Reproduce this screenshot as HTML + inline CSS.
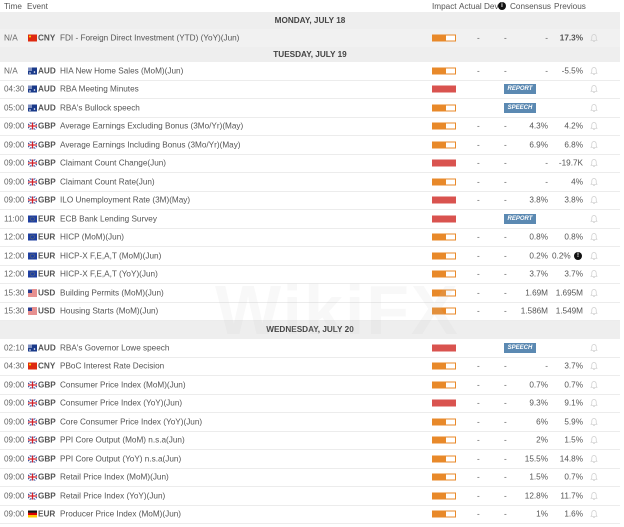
<!DOCTYPE html>
<html><head><meta charset="utf-8"><style>
*{margin:0;padding:0;box-sizing:border-box}
body{width:624px;height:527px;background:#fff;font-family:"Liberation Sans",sans-serif;font-size:8.2px;color:#555;position:relative;overflow:hidden}
.r{position:absolute;left:0;width:620px;height:18.5px;border-bottom:1px solid #ececec}
.r>*{position:absolute;top:50%;transform:translateY(-50%);white-space:nowrap}
.t{left:4px;color:#666}
.f{left:28px;width:9px;height:7px}
.c{left:38px;font-weight:bold;color:#555}
.e{left:60px;color:#555}
.im{left:432px;width:24px;height:7px;border:1px solid #e8892a;background:linear-gradient(90deg,#e8892a 58%,#fff 58%)}
.hi{left:432px;width:24px;height:7px;background:#d9534f}
.a{left:477px}.d{left:504px}
.cs{right:72px;color:#555}
.p{right:37px;color:#555}
.b{left:590px;width:8px;height:9px}
.bd{left:504px;width:32px;height:10px;background:#5b89b2;color:#fff;font-size:6px;font-weight:bold;font-style:italic;text-align:center;line-height:10px}
.day{position:absolute;left:0;width:620px;background:#eeeeee;font-weight:bold;color:#444;text-align:center;font-size:8.2px}
.gr{background:#f1f1f1}
</style></head><body>
<svg width="0" height="0" style="position:absolute">
<defs>
<symbol id="bell" viewBox="0 0 8 9"><path d="M4 1C2.5 1 1.8 2.2 1.8 3.5V5.5L1 6.8H7L6.2 5.5V3.5C6.2 2.2 5.5 1 4 1Z M3.2 7.6A0.9 0.9 0 0 0 4.8 7.6" fill="none" stroke="#ccc" stroke-width="0.7"/></symbol>
<symbol id="cn" viewBox="0 0 9 7"><rect width="9" height="7" fill="#de2910"/><circle cx="2" cy="2" r="1" fill="#ffde00"/></symbol>
<symbol id="au" viewBox="0 0 9 7"><rect width="9" height="7" fill="#1a3a8a"/><rect width="4" height="3.5" fill="#8090c0"/><circle cx="6.5" cy="4.5" r="0.8" fill="#fff"/><circle cx="2" cy="5.5" r="0.8" fill="#fff"/></symbol>
<symbol id="gb" viewBox="0 0 9 7"><rect width="9" height="7" fill="#2a3d8f"/><path d="M0 0L9 7M9 0L0 7" stroke="#fff" stroke-width="1.4"/><path d="M4.5 0V7M0 3.5H9" stroke="#fff" stroke-width="2.2"/><path d="M4.5 0V7M0 3.5H9" stroke="#d0202a" stroke-width="1.2"/></symbol>
<symbol id="eu" viewBox="0 0 9 7"><rect width="9" height="7" fill="#1f3fa0"/><circle cx="4.5" cy="3.5" r="2" fill="none" stroke="#ffd400" stroke-width="0.5" stroke-dasharray="0.5 0.7"/></symbol>
<symbol id="us" viewBox="0 0 9 7"><rect width="9" height="7" fill="#fff"/><path d="M0 .5H9M0 2.5H9M0 4.5H9M0 6.5H9" stroke="#c22" stroke-width="1"/><rect width="4" height="3.5" fill="#2a3d8f"/></symbol>
<symbol id="de" viewBox="0 0 9 7"><rect width="9" height="2.4" fill="#111"/><rect y="2.3" width="9" height="2.4" fill="#d00"/><rect y="4.6" width="9" height="2.4" fill="#fc0"/></symbol>
</defs></svg>

<div style="position:absolute;left:0;top:0;width:620px;height:12px;color:#555">
<span style="position:absolute;left:4px;top:2px">Time</span>
<span style="position:absolute;left:27px;top:2px">Event</span>
<span style="position:absolute;left:432px;top:2px">Impact</span>
<span style="position:absolute;left:459px;top:2px">Actual</span>
<span style="position:absolute;left:484px;top:2px">Dev</span>
<span style="position:absolute;left:498px;top:2px;width:8px;height:8px;border-radius:50%;background:#111;color:#fff;font-size:6px;text-align:center;line-height:8px;font-weight:bold">i</span>
<span style="position:absolute;left:510px;top:2px">Consensus</span>
<span style="position:absolute;left:554px;top:2px">Previous</span>
</div>
<div class="day" style="top:12px;height:17px;line-height:17px">MONDAY, JULY 18</div>
<div class="r gr" style="top:29px"><span class="t">N/A</span><svg class="f"><use href="#cn"/></svg><span class="c">CNY</span><span class="e">FDI - Foreign Direct Investment (YTD) (YoY)(Jun)</span><span class="im"></span><span class="a">-</span><span class="d">-</span><span class="cs">-</span><span class="p" style="font-weight:bold">17.3%</span><svg class="b"><use href="#bell"/></svg></div>
<div class="day" style="top:47px;height:15px;line-height:15px">TUESDAY, JULY 19</div>

<div class="r" style="top:62px"><span class="t">N/A</span><svg class="f"><use href="#au"/></svg><span class="c">AUD</span><span class="e">HIA New Home Sales (MoM)(Jun)</span><span class="im"></span><span class="a">-</span><span class="d">-</span><span class="cs">-</span><span class="p">-5.5%</span><svg class="b"><use href="#bell"/></svg></div>
<div class="r" style="top:80.5px"><span class="t">04:30</span><svg class="f"><use href="#au"/></svg><span class="c">AUD</span><span class="e">RBA Meeting Minutes</span><span class="hi"></span><span class="bd">REPORT</span><svg class="b"><use href="#bell"/></svg></div>
<div class="r" style="top:99px"><span class="t">05:00</span><svg class="f"><use href="#au"/></svg><span class="c">AUD</span><span class="e">RBA's Bullock speech</span><span class="im"></span><span class="bd">SPEECH</span><svg class="b"><use href="#bell"/></svg></div>
<div class="r" style="top:117.5px"><span class="t">09:00</span><svg class="f"><use href="#gb"/></svg><span class="c">GBP</span><span class="e">Average Earnings Excluding Bonus (3Mo/Yr)(May)</span><span class="im"></span><span class="a">-</span><span class="d">-</span><span class="cs">4.3%</span><span class="p">4.2%</span><svg class="b"><use href="#bell"/></svg></div>
<div class="r" style="top:136px"><span class="t">09:00</span><svg class="f"><use href="#gb"/></svg><span class="c">GBP</span><span class="e">Average Earnings Including Bonus (3Mo/Yr)(May)</span><span class="im"></span><span class="a">-</span><span class="d">-</span><span class="cs">6.9%</span><span class="p">6.8%</span><svg class="b"><use href="#bell"/></svg></div>
<div class="r" style="top:154.5px"><span class="t">09:00</span><svg class="f"><use href="#gb"/></svg><span class="c">GBP</span><span class="e">Claimant Count Change(Jun)</span><span class="hi"></span><span class="a">-</span><span class="d">-</span><span class="cs">-</span><span class="p">-19.7K</span><svg class="b"><use href="#bell"/></svg></div>
<div class="r" style="top:173px"><span class="t">09:00</span><svg class="f"><use href="#gb"/></svg><span class="c">GBP</span><span class="e">Claimant Count Rate(Jun)</span><span class="im"></span><span class="a">-</span><span class="d">-</span><span class="cs">-</span><span class="p">4%</span><svg class="b"><use href="#bell"/></svg></div>
<div class="r" style="top:191.5px"><span class="t">09:00</span><svg class="f"><use href="#gb"/></svg><span class="c">GBP</span><span class="e">ILO Unemployment Rate (3M)(May)</span><span class="hi"></span><span class="a">-</span><span class="d">-</span><span class="cs">3.8%</span><span class="p">3.8%</span><svg class="b"><use href="#bell"/></svg></div>
<div class="r" style="top:210px"><span class="t">11:00</span><svg class="f"><use href="#eu"/></svg><span class="c">EUR</span><span class="e">ECB Bank Lending Survey</span><span class="hi"></span><span class="bd">REPORT</span><svg class="b"><use href="#bell"/></svg></div>
<div class="r" style="top:228.5px"><span class="t">12:00</span><svg class="f"><use href="#eu"/></svg><span class="c">EUR</span><span class="e">HICP (MoM)(Jun)</span><span class="im"></span><span class="a">-</span><span class="d">-</span><span class="cs">0.8%</span><span class="p">0.8%</span><svg class="b"><use href="#bell"/></svg></div>
<div class="r" style="top:247px"><span class="t">12:00</span><svg class="f"><use href="#eu"/></svg><span class="c">EUR</span><span class="e">HICP-X F,E,A,T (MoM)(Jun)</span><span class="im"></span><span class="a">-</span><span class="d">-</span><span class="cs">0.2%</span><span style="left:552px">0.2%</span><span style="left:574px;width:8px;height:8px;border-radius:50%;background:#111;color:#fff;font-size:6px;text-align:center;line-height:8px;font-weight:bold">!</span><svg class="b"><use href="#bell"/></svg></div>
<div class="r" style="top:265.5px"><span class="t">12:00</span><svg class="f"><use href="#eu"/></svg><span class="c">EUR</span><span class="e">HICP-X F,E,A,T (YoY)(Jun)</span><span class="im"></span><span class="a">-</span><span class="d">-</span><span class="cs">3.7%</span><span class="p">3.7%</span><svg class="b"><use href="#bell"/></svg></div>
<div class="r" style="top:284px"><span class="t">15:30</span><svg class="f"><use href="#us"/></svg><span class="c">USD</span><span class="e">Building Permits (MoM)(Jun)</span><span class="im"></span><span class="a">-</span><span class="d">-</span><span class="cs">1.69M</span><span class="p">1.695M</span><svg class="b"><use href="#bell"/></svg></div>
<div class="r" style="top:302.5px"><span class="t">15:30</span><svg class="f"><use href="#us"/></svg><span class="c">USD</span><span class="e">Housing Starts (MoM)(Jun)</span><span class="im"></span><span class="a">-</span><span class="d">-</span><span class="cs">1.586M</span><span class="p">1.549M</span><svg class="b"><use href="#bell"/></svg></div>
<div class="day" style="top:321px;height:18px;line-height:18px">WEDNESDAY, JULY 20</div>

<div class="r" style="top:339px"><span class="t">02:10</span><svg class="f"><use href="#au"/></svg><span class="c">AUD</span><span class="e">RBA's Governor Lowe speech</span><span class="hi"></span><span class="bd">SPEECH</span><svg class="b"><use href="#bell"/></svg></div>
<div class="r" style="top:357.5px"><span class="t">04:30</span><svg class="f"><use href="#cn"/></svg><span class="c">CNY</span><span class="e">PBoC Interest Rate Decision</span><span class="im"></span><span class="a">-</span><span class="d">-</span><span class="cs">-</span><span class="p">3.7%</span><svg class="b"><use href="#bell"/></svg></div>
<div class="r" style="top:376px"><span class="t">09:00</span><svg class="f"><use href="#gb"/></svg><span class="c">GBP</span><span class="e">Consumer Price Index (MoM)(Jun)</span><span class="im"></span><span class="a">-</span><span class="d">-</span><span class="cs">0.7%</span><span class="p">0.7%</span><svg class="b"><use href="#bell"/></svg></div>
<div class="r" style="top:394.5px"><span class="t">09:00</span><svg class="f"><use href="#gb"/></svg><span class="c">GBP</span><span class="e">Consumer Price Index (YoY)(Jun)</span><span class="hi"></span><span class="a">-</span><span class="d">-</span><span class="cs">9.3%</span><span class="p">9.1%</span><svg class="b"><use href="#bell"/></svg></div>
<div class="r" style="top:413px"><span class="t">09:00</span><svg class="f"><use href="#gb"/></svg><span class="c">GBP</span><span class="e">Core Consumer Price Index (YoY)(Jun)</span><span class="im"></span><span class="a">-</span><span class="d">-</span><span class="cs">6%</span><span class="p">5.9%</span><svg class="b"><use href="#bell"/></svg></div>
<div class="r" style="top:431.5px"><span class="t">09:00</span><svg class="f"><use href="#gb"/></svg><span class="c">GBP</span><span class="e">PPI Core Output (MoM) n.s.a(Jun)</span><span class="im"></span><span class="a">-</span><span class="d">-</span><span class="cs">2%</span><span class="p">1.5%</span><svg class="b"><use href="#bell"/></svg></div>
<div class="r" style="top:450px"><span class="t">09:00</span><svg class="f"><use href="#gb"/></svg><span class="c">GBP</span><span class="e">PPI Core Output (YoY) n.s.a(Jun)</span><span class="im"></span><span class="a">-</span><span class="d">-</span><span class="cs">15.5%</span><span class="p">14.8%</span><svg class="b"><use href="#bell"/></svg></div>
<div class="r" style="top:468.5px"><span class="t">09:00</span><svg class="f"><use href="#gb"/></svg><span class="c">GBP</span><span class="e">Retail Price Index (MoM)(Jun)</span><span class="im"></span><span class="a">-</span><span class="d">-</span><span class="cs">1.5%</span><span class="p">0.7%</span><svg class="b"><use href="#bell"/></svg></div>
<div class="r" style="top:487px"><span class="t">09:00</span><svg class="f"><use href="#gb"/></svg><span class="c">GBP</span><span class="e">Retail Price Index (YoY)(Jun)</span><span class="im"></span><span class="a">-</span><span class="d">-</span><span class="cs">12.8%</span><span class="p">11.7%</span><svg class="b"><use href="#bell"/></svg></div>
<div class="r" style="top:505.5px"><span class="t">09:00</span><svg class="f"><use href="#de"/></svg><span class="c">EUR</span><span class="e">Producer Price Index (MoM)(Jun)</span><span class="im"></span><span class="a">-</span><span class="d">-</span><span class="cs">1%</span><span class="p">1.6%</span><svg class="b"><use href="#bell"/></svg></div>

<div style="position:absolute;left:215px;top:270px;font-size:70px;font-weight:bold;color:rgba(200,200,200,0.12);letter-spacing:2px">WikiFX</div>
</body></html>
